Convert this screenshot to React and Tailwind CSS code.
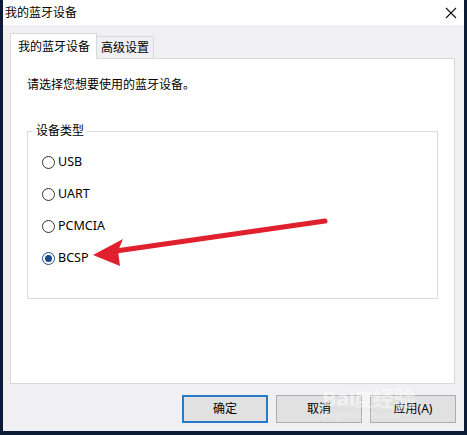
export default function App() {
  const radios = [
    { label: "USB", checked: false },
    { label: "UART", checked: false },
    { label: "PCMCIA", checked: false },
    { label: "BCSP", checked: true },
  ];
  return (
    <div
      className="relative w-[467px] h-[435px] bg-[#0d1b38] pl-[3px] pr-[3px] pb-[4px] flex text-[12px] text-black"
      style={{ fontFamily: '"Noto Sans", "Noto Sans CJK SC", sans-serif' }}
    >
      <div className="flex-1 flex flex-col bg-[#f0eff2]">
        <div className="h-[25px] bg-white flex items-center justify-between pl-[2px] pr-[7px] shrink-0">
          <span className="leading-none">我的蓝牙设备</span>
          <svg width="12" height="12" viewBox="0 0 12 12">
            <path d="M1 1L11 11M11 1L1 11" stroke="#111" strokeWidth="1.1" />
          </svg>
        </div>
        <div className="pl-[7px] pr-[9px] pt-[8px]">
          <div className="flex items-end h-[25px]">
            <div className="relative z-10 -mb-px h-[26px] w-[87px] bg-white border border-b-0 border-[#d9d9d9] flex items-center pl-[7px]">
              我的蓝牙设备
            </div>
            <div className="h-[22px] w-[57px] border border-l-0 border-b-0 border-[#d9d9d9] bg-[#f0eff2] flex items-center pl-[4px]">
              高级设置
            </div>
          </div>
          <div className="h-[326px] bg-white border border-[#d9d9d9] pt-[18px]">
            <div className="pl-[16px] leading-[16px]">请选择您想要使用的蓝牙设备。</div>
            <fieldset className="mt-[30px] mx-[16px] border border-[#dcdcdc] pt-[7px] pb-[24px]">
              <legend className="ml-[5px] px-[3px] leading-[16px]">设备类型</legend>
              <div className="pl-[14px]">
                {radios.map((r) => (
                  <div key={r.label} className="h-[32px] flex items-center gap-[3px]">
                    <span
                      className={
                        r.checked
                          ? "w-[13px] h-[13px] rounded-full border border-[#1c4f8c] bg-white flex items-center justify-center"
                          : "w-[13px] h-[13px] rounded-full border border-[#333333] bg-white"
                      }
                    >
                      {r.checked && <span className="w-[7px] h-[7px] rounded-full bg-[#1b4a86]" />}
                    </span>
                    <span className="text-[12.5px]">{r.label}</span>
                  </div>
                ))}
              </div>
            </fieldset>
          </div>
        </div>
        <div className="flex justify-end gap-[8px] pr-[8px] mt-[11px]">
          <button className="w-[86px] h-[28px] bg-[#e1e1e1] border-2 border-[#2a78c8] flex items-center justify-center">
            确定
          </button>
          <button className="w-[86px] h-[28px] bg-[#e1e1e1] border border-[#adadad] flex items-center justify-center">
            取消
          </button>
          <button className="w-[86px] h-[28px] bg-[#e1e1e1] border border-[#adadad] flex items-center justify-center">
            应用(A)
          </button>
        </div>
      </div>
      <div className="absolute left-[322px] top-[386px] text-white opacity-50 pointer-events-none leading-none">
        <div className="text-[22px] font-bold tracking-tight">Bai<span className="text-[18px]">度</span>经验</div>
        <div className="text-[9px] mt-[2px] opacity-80">jingyan.baidu.com</div>
      </div>
      <svg className="absolute inset-0 pointer-events-none" width="467" height="435" viewBox="0 0 467 435">
        <line x1="325" y1="221" x2="116" y2="251" stroke="#e0202c" strokeWidth="5" strokeLinecap="round" />
        <polygon points="93,255 123,239 118,251 120,266" fill="#e0202c" />
      </svg>
    </div>
  );
}
